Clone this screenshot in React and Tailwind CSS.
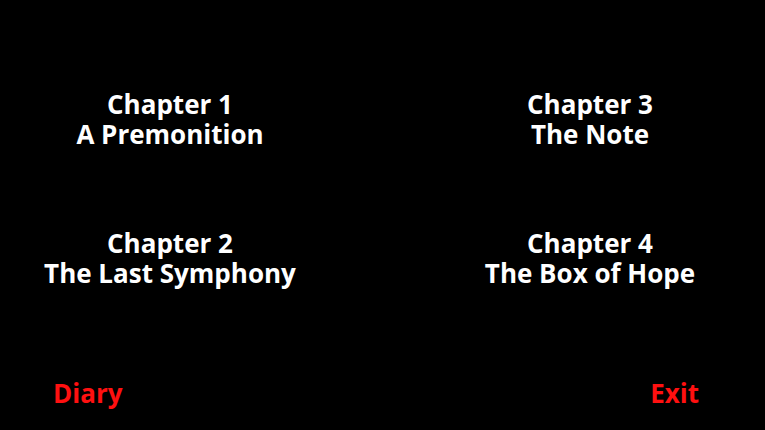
export default function App() {
  const chapters = [
    ["Chapter 1", "A Premonition"],
    ["Chapter 3", "The Note"],
    ["Chapter 2", "The Last Symphony"],
    ["Chapter 4", "The Box of Hope"],
  ];

  return (
    <div
      className="w-[765px] h-[430px] bg-black flex flex-col overflow-hidden"
      style={{ fontFamily: '"Open Sans", sans-serif' }}
    >
      {/* Chapter grid */}
      <div className="grid grid-cols-[340px_340px] gap-x-[80px] gap-y-[79px] pt-[89px]">
        {chapters.map(([num, title]) => (
          <div key={num} className="text-center text-white font-bold text-[26px] leading-[30px]">
            <p>{num}</p>
            <p>{title}</p>
          </div>
        ))}
      </div>

      {/* Bottom links */}
      <div className="flex justify-between mt-auto mb-[22px] pl-[53px] pr-[66px] text-[#ff1010] font-bold text-[26px] leading-[30px]">
        <span>Diary</span>
        <span>Exit</span>
      </div>
    </div>
  );
}
